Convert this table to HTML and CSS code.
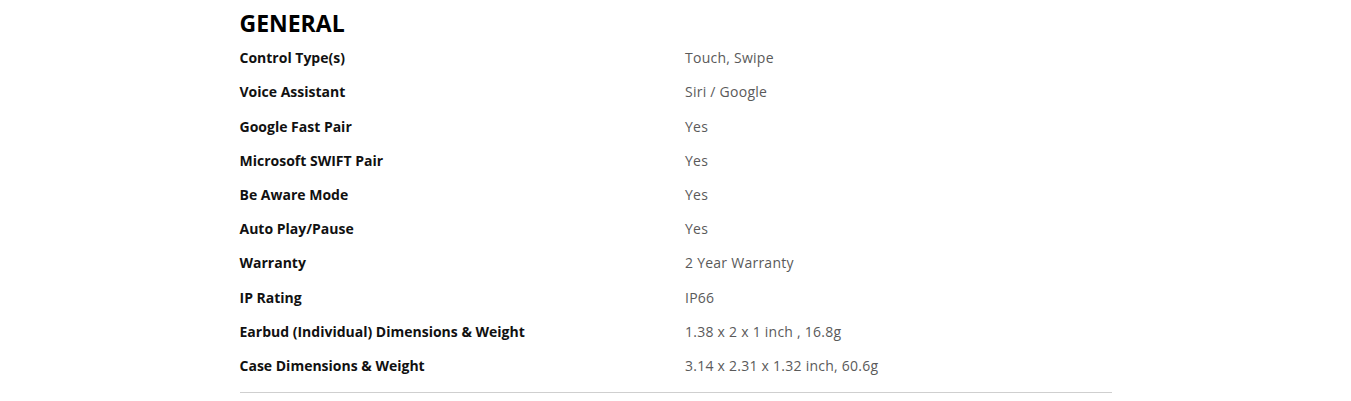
FILE: index.html
```html
<!DOCTYPE html>
<html>
<head>
<meta charset="utf-8">
<link rel="stylesheet" href="styles.css">
</head>
<body>
<section class="specs">
  <h2 class="specs-title">GENERAL</h2>
  <div class="spec-list">
    <div class="spec-row"><div class="spec-label">Control Type(s)</div><div class="spec-value">Touch, Swipe</div></div>
    <div class="spec-row"><div class="spec-label">Voice Assistant</div><div class="spec-value">Siri / Google</div></div>
    <div class="spec-row"><div class="spec-label">Google Fast Pair</div><div class="spec-value">Yes</div></div>
    <div class="spec-row"><div class="spec-label">Microsoft SWIFT Pair</div><div class="spec-value">Yes</div></div>
    <div class="spec-row"><div class="spec-label">Be Aware Mode</div><div class="spec-value">Yes</div></div>
    <div class="spec-row"><div class="spec-label">Auto Play/Pause</div><div class="spec-value">Yes</div></div>
    <div class="spec-row"><div class="spec-label">Warranty</div><div class="spec-value">2 Year Warranty</div></div>
    <div class="spec-row"><div class="spec-label">IP Rating</div><div class="spec-value">IP66</div></div>
    <div class="spec-row"><div class="spec-label">Earbud (Individual) Dimensions &amp; Weight</div><div class="spec-value">1.38 x 2 x 1 inch , 16.8g</div></div>
    <div class="spec-row"><div class="spec-label">Case Dimensions &amp; Weight</div><div class="spec-value">3.14 x 2.31 x 1.32 inch, 60.6g</div></div>
  </div>
</section>
</body>
</html>
```
FILE: styles.css
```css
html, body {
  margin: 0;
  padding: 0;
  background: #fff;
}
body {
  font-family: "Open Sans", "Liberation Sans", sans-serif;
  color: #000;
}
.specs {
  width: 872px;
  margin: 0 auto;
  padding-top: 8px;
  border-bottom: 1px solid #cfcfcf;
  padding-bottom: 10px;
}
.specs-title {
  margin: 0;
  font-size: 23px;
  font-weight: 700;
  line-height: 30px;
  color: #000;
  margin-bottom: 2.6px;
}
.spec-list {
  display: flex;
  flex-direction: column;
}
.spec-row {
  display: grid;
  grid-template-columns: 445.5px 1fr;
  height: 34.2px;
  align-items: center;
}
.spec-label {
  font-size: 14px;
  font-weight: 700;
  color: #111;
}
.spec-value {
  font-size: 14px;
  letter-spacing: 0.25px;
  color: #5a5a5a;
}
```
